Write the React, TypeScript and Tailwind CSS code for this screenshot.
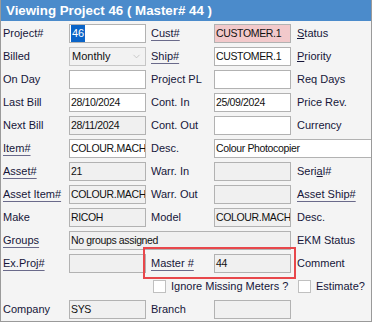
import { ChevronDown } from 'lucide-react'
import type { ReactNode } from 'react'

const font = { fontFamily: '"Liberation Sans", Arial, sans-serif' }

function Label({ children, link, col = 1 }: { children: ReactNode; link?: boolean; col?: number }) {
  const pad = col === 1 ? '' : col === 2 ? 'pl-[5px]' : 'pl-[6px]'
  return (
    <div className={`flex h-[19px] items-center whitespace-nowrap text-[11px] text-[#16163a] ${pad}`}>
      <span className={link ? 'underline decoration-[#6a6a8a] underline-offset-[3px]' : ''}>{children}</span>
    </div>
  )
}

function Field({ value = '', tone = 'white', wide }: { value?: string; tone?: 'white' | 'gray' | 'pink'; wide?: string }) {
  const bg = tone === 'pink' ? 'bg-[#f2c9cb]' : tone === 'gray' ? 'bg-[#f0f0f0]' : 'bg-white'
  return (
    <div
      className={`flex h-[19px] min-w-0 items-center overflow-hidden whitespace-nowrap border border-[#b2b2b2] pl-[1px] text-[10.5px] tracking-[-0.35px] text-[#111] ${bg} ${wide ?? ''}`}
    >
      {value}
    </div>
  )
}

export default function App() {
  return (
    <div className="h-[323px] w-[373px] bg-white" style={font}>
      <div className="h-[322px] w-[372px] overflow-hidden border-x border-b border-[#9a9a9a] bg-[#f4f4f4]">
        <div className="flex h-[21px] items-center bg-[#4b8bcb] pl-[5px] text-[13.3px] font-bold text-white">
          Viewing Project 46 ( Master# 44 )
        </div>

        <div className="grid grid-cols-[66px_77px_68px_77px_1fr] gap-y-[4px] pl-[2px] pt-[3px]">
          {/* row 1 */}
          <Label>Project#</Label>
          <div className="flex h-[19px] items-center border border-[#b2b2b2] bg-white pl-[1px] text-[11px]">
            <span className="bg-[#0a64c8] px-[1px] text-white">46</span>
          </div>
          <Label link col={2}>Cust#</Label>
          <Field value="CUSTOMER.1" tone="pink" />
          <Label col={3}>
            <span className="underline">S</span>tatus
          </Label>

          {/* row 2 */}
          <Label>Billed</Label>
          <div className="flex h-[19px] items-center justify-between border border-[#c6c6c6] bg-[#f2f2f2] pl-[2px] pr-[3px] text-[11px] text-[#111]">
            <span>Monthly</span>
            <ChevronDown size={11} strokeWidth={1.5} className="text-[#b4b4b4]" />
          </div>
          <Label link col={2}>Ship#</Label>
          <Field value="CUSTOMER.1" />
          <Label col={3}>
            <span className="underline">P</span>riority
          </Label>

          {/* row 3 */}
          <Label>On Day</Label>
          <Field />
          <Label col={2}>Project PL</Label>
          <Field />
          <Label col={3}>Req Days</Label>

          {/* row 4 */}
          <Label>Last Bill</Label>
          <Field value="28/10/2024" />
          <Label col={2}>Cont. In</Label>
          <Field value="25/09/2024" />
          <Label col={3}>Price Rev.</Label>

          {/* row 5 */}
          <Label>Next Bill</Label>
          <Field value="28/11/2024" tone="gray" />
          <Label col={2}>Cont. Out</Label>
          <Field />
          <Label col={3}>Currency</Label>

          {/* row 6 */}
          <Label link>Item#</Label>
          <Field value="COLOUR.MACH" />
          <Label col={2}>Desc.</Label>
          <Field value="Colour Photocopier" wide="col-span-2 -mr-[10px]" />

          {/* row 7 */}
          <Label link>Asset#</Label>
          <Field value="21" tone="gray" />
          <Label col={2}>Warr. In</Label>
          <Field tone="gray" />
          <Label col={3}>
            Seri<span className="underline">a</span>l#
          </Label>

          {/* row 8 */}
          <Label link>Asset Item#</Label>
          <Field value="COLOUR.MACH" tone="gray" />
          <Label col={2}>Warr. Out</Label>
          <Field tone="gray" />
          <Label link col={3}>Asset Ship#</Label>

          {/* row 9 */}
          <Label>Make</Label>
          <Field value="RICOH" tone="gray" />
          <Label col={2}>Model</Label>
          <Field value="COLOUR.MACH" tone="gray" />
          <Label col={3}>Desc.</Label>

          {/* row 10 */}
          <Label link>Groups</Label>
          <Field value="No groups assigned" tone="gray" wide="col-span-3" />
          <Label col={3}>EKM Status</Label>

          {/* row 11 */}
          <Label link>Ex.Proj#</Label>
          <Field tone="gray" />
          <div className="relative col-span-2 grid grid-cols-[68px_77px]">
            <Label link col={2}>Master #</Label>
            <Field value="44" tone="gray" />
            <div className="pointer-events-none absolute -bottom-[6px] -left-[3px] -right-[5px] -top-[7px] border-2 border-[#e8474b]" />
          </div>
          <Label col={3}>Comment</Label>

          {/* row 12 */}
          <div className="col-span-2" />
          <div className="col-span-2 flex h-[19px] items-center pl-[7px] text-[11px] text-[#16163a]">
            <span className="mr-[5px] h-[13px] w-[13px] border border-[#c0c0c0] bg-white" />
            Ignore Missing Meters ?
          </div>
          <div className="flex h-[19px] items-center pl-[7px] text-[11px] text-[#16163a]">
            <span className="mr-[5px] h-[13px] w-[13px] border border-[#c0c0c0] bg-white" />
            Estimate?
          </div>

          {/* row 13 */}
          <Label>Company</Label>
          <Field value="SYS" tone="gray" />
          <Label col={2}>Branch</Label>
          <Field tone="gray" />
          <div />
        </div>
      </div>
    </div>
  )
}
